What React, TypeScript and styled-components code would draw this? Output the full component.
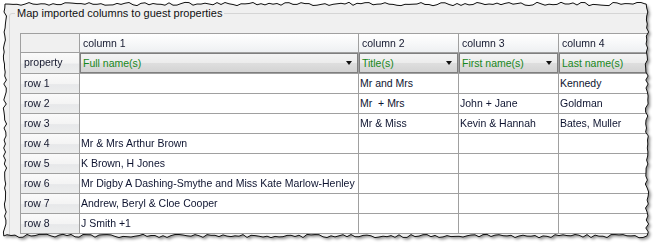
import React from 'react';
import styled, { createGlobalStyle } from 'styled-components';

const GlobalStyle = createGlobalStyle`
  html, body {
    margin: 0;
    padding: 0;
    background: #fff;
  }
  body {
    font-family: "Liberation Sans", Arial, sans-serif;
    font-size: 10.5px;
    color: #0e1430;
  }
`;

// seeded random so the torn edge is the same on every render
const seeded = (seed: number) => () => {
  seed = (seed + 0x6d2b79f5) | 0;
  let t = Math.imul(seed ^ (seed >>> 15), 1 | seed);
  t = (t + Math.imul(t ^ (t >>> 7), 61 | t)) ^ t;
  return ((t ^ (t >>> 14)) >>> 0) / 4294967296;
};

const tornEdge = (): [number, number][] => {
  const rnd = seeded(11);
  const L = 5, T = 4, R = 647, B = 236, step = 4, amp = 1.7;
  const j = () => (rnd() - 0.5) * 2 * amp;
  const pts: [number, number][] = [];
  for (let x = L; x < R; x += step) pts.push([x, T + j()]);
  for (let y = T; y < B; y += step) pts.push([R + j(), y]);
  for (let x = R; x > L; x -= step) pts.push([x, B + j()]);
  for (let y = B; y > T; y -= step) pts.push([L + j(), y]);
  return pts;
};

const EDGE = tornEdge();
const CLIP = `polygon(${EDGE.map(([x, y]) => `${x.toFixed(1)}px ${y.toFixed(1)}px`).join(', ')})`;
const OUTLINE = 'M' + EDGE.map(([x, y]) => `${x.toFixed(1)} ${y.toFixed(1)}`).join(' L') + ' Z';

const Frame = styled.div`
  position: relative;
  width: 654px;
  height: 243px;
  overflow: hidden;
`;

const Shadowed = styled.div`
  width: 100%;
  height: 100%;
  filter: drop-shadow(2px 2px 1.5px rgba(0, 0, 0, 0.45));
`;

const Paper = styled.div<{ $clip: string }>`
  width: 100%;
  height: 100%;
  box-sizing: border-box;
  padding: 7px 0 0 9px;
  background: #f0f0f0;
  clip-path: ${(p) => p.$clip};
`;

const Outline = styled.svg`
  position: absolute;
  left: 0;
  top: 0;
  pointer-events: none;
`;

const GroupBox = styled.fieldset`
  margin: 0;
  width: 700px;
  height: 260px;
  box-sizing: border-box;
  border: 1px solid #d5d5d5;
  border-radius: 3px;
  padding: 13px 0 0 10px;
  min-width: 0;
`;

const Legend = styled.legend`
  margin-left: -5px;
  padding: 0 2px;
  line-height: 13px;
  font-size: 11px;
  color: #101010;
`;

const Grid = styled.div`
  display: grid;
  grid-template-columns: 59px 279px 100px 100px 100px;
  grid-template-rows: 19px 21px repeat(8, 20px);
  width: max-content;
  border-top: 1px solid #a0a0a0;
  border-left: 1px solid #a0a0a0;
`;

const Cell = styled.div`
  box-sizing: border-box;
  border-right: 1px solid #a0a0a0;
  border-bottom: 1px solid #a0a0a0;
  background: #fff;
  padding-left: 1px;
  line-height: 19px;
  white-space: pre;
  overflow: hidden;
`;

const Corner = styled(Cell)`
  background: #f0f0f0;
`;

const ColumnHead = styled(Cell)`
  padding-left: 3px;
  line-height: 18px;
  background: linear-gradient(to bottom, #ffffff 0%, #f7f8f9 50%, #eef0f2 100%);
  color: #14182e;
`;

const RowHead = styled(Cell)`
  padding-left: 3px;
  background: linear-gradient(to bottom, #fafafa 0%, #f4f4f4 50%, #e7e8ea 56%, #eceded 100%);
  color: #14182e;
`;

const ComboCell = styled(Cell)`
  padding: 0;
  display: flex;
`;

const Combo = styled.div`
  flex: 1;
  display: flex;
  align-items: center;
  justify-content: space-between;
  border: 1px solid #7f7f7f;
  padding-left: 2px;
  background: linear-gradient(to bottom, #f4f4f4 0%, #ececec 48%, #dedede 52%, #d3d3d3 100%);
  color: #17871a;
`;

const Arrow = styled.span`
  width: 0;
  height: 0;
  margin-right: 5px;
  border-left: 3.5px solid transparent;
  border-right: 3.5px solid transparent;
  border-top: 4px solid #111;
`;

const columns = ['column 1', 'column 2', 'column 3', 'column 4'];
const properties = ['Full name(s)', 'Title(s)', 'First name(s)', 'Last name(s)'];
const rows: string[][] = [
  ['', 'Mr and Mrs', '', 'Kennedy'],
  ['', 'Mr  + Mrs', 'John + Jane', 'Goldman'],
  ['', 'Mr & Miss', 'Kevin & Hannah', 'Bates, Muller'],
  ['Mr & Mrs Arthur Brown', '', '', ''],
  ['K Brown, H Jones', '', '', ''],
  ['Mr Digby A Dashing-Smythe and Miss Kate Marlow-Henley', '', '', ''],
  ['Andrew, Beryl & Cloe Cooper', '', '', ''],
  ['J Smith +1', '', '', ''],
];

const App: React.FC = () => {
  return (
    <>
      <GlobalStyle />
      <Frame>
        <Shadowed>
          <Paper $clip={CLIP}>
            <GroupBox>
              <Legend>Map imported columns to guest properties</Legend>
              <Grid>
                <Corner />
                {columns.map((c) => (
                  <ColumnHead key={c}>{c}</ColumnHead>
                ))}
                <RowHead>property</RowHead>
                {properties.map((p) => (
                  <ComboCell key={p}>
                    <Combo>
                      {p}
                      <Arrow />
                    </Combo>
                  </ComboCell>
                ))}
                {rows.map((r, i) => (
                  <React.Fragment key={i}>
                    <RowHead>row {i + 1}</RowHead>
                    {r.map((v, k) => (
                      <Cell key={k}>{v}</Cell>
                    ))}
                  </React.Fragment>
                ))}
              </Grid>
            </GroupBox>
          </Paper>
        </Shadowed>
        <Outline width={654} height={243} viewBox="0 0 654 243">
          <path d={OUTLINE} fill="none" stroke="#111" strokeWidth={1} />
        </Outline>
      </Frame>
    </>
  );
};

export default App;
